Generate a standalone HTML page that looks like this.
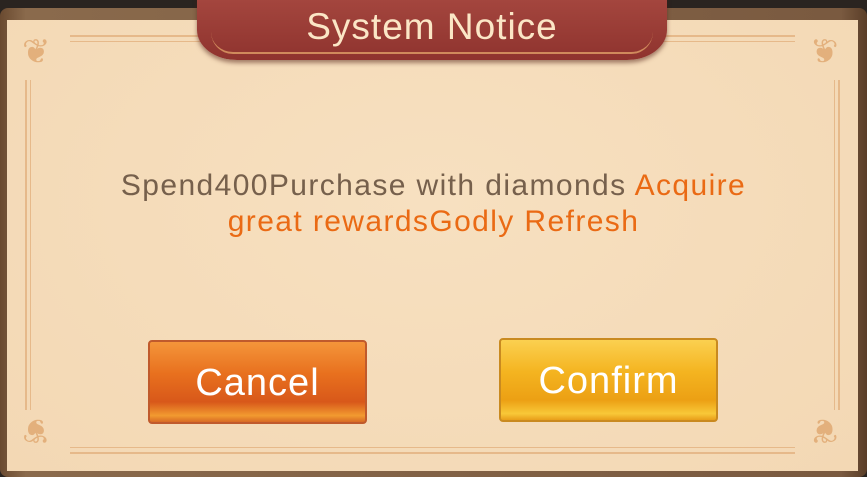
<!DOCTYPE html>
<html><head><style>
body{margin:0;width:867px;height:477px;overflow:hidden;background:#2a2420;font-family:"Liberation Sans",sans-serif;position:relative}
.wood{position:absolute;left:0;top:8px;width:867px;height:469px;background:linear-gradient(90deg,#6a4a30,#8a6a4c 3%,#7a5a40 97%,#5a3e28);border-radius:8px}
.paper{position:absolute;left:7px;top:20px;width:851px;height:451px;background:radial-gradient(ellipse at 50% 40%,#f7e0c0,#f3d8b4);}
.ln{position:absolute;border-color:#e6b98a;border-style:solid;border-width:0}
.rib{position:absolute;left:197px;top:-4px;width:470px;height:64px;background:linear-gradient(#a5473f,#8f332e);border-radius:0 0 40px 40px/0 0 30px 30px;box-shadow:0 3px 4px rgba(80,30,20,.5)}
.rib:after{content:"";position:absolute;left:14px;right:14px;bottom:6px;height:20px;border-bottom:2px solid #d08a5c;border-radius:0 0 30px 30px}
.title{position:absolute;left:197px;width:470px;top:6px;text-align:center;color:#fbe6c6;font-size:37px;letter-spacing:1px}
.msg{position:absolute;left:0;width:867px;top:168px;text-align:center;font-size:30px;letter-spacing:1.4px;line-height:36px;color:#76604c}
.o{color:#ea6a14}
.btn{position:absolute;width:219px;height:84px;border-radius:4px;color:#fff;font-size:38px;letter-spacing:1px;text-align:center;line-height:82px;box-sizing:border-box}
.c{left:148px;top:340px;background:linear-gradient(#f4953a,#e8701e 40%,#d8581a 75%,#f29a30 92%,#d86a24);border:2px solid #c05a2c}
.f{left:499px;top:338px;background:linear-gradient(#fbd050,#f4b420 40%,#eca014 75%,#f8c838 92%,#e89e1a);border:2px solid #c98a20}
</style></head><body>
<div class="wood"></div>
<div class="paper"></div>
<div class="ln" style="left:70px;top:35px;width:150px;border-top-width:2px"></div>
<div class="ln" style="left:645px;top:35px;width:150px;border-top-width:2px"></div>
<div class="ln" style="left:70px;top:41px;width:150px;border-top-width:1px"></div>
<div class="ln" style="left:645px;top:41px;width:150px;border-top-width:1px"></div>
<div class="ln" style="left:25px;top:80px;height:330px;border-left-width:2px;border-right-width:1px;width:3px"></div>
<div class="ln" style="left:834px;top:80px;height:330px;border-left-width:1px;border-right-width:2px;width:3px"></div>
<div class="ln" style="left:70px;top:447px;width:725px;border-top-width:1px"></div>
<div class="ln" style="left:70px;top:452px;width:725px;border-top-width:2px"></div>
<div style="position:absolute;left:22px;top:32px;color:#e3b07c;font-size:34px">❦</div>
<div style="position:absolute;left:810px;top:32px;color:#e3b07c;font-size:34px;transform:scaleX(-1)">❦</div>
<div style="position:absolute;left:22px;top:410px;color:#e3b07c;font-size:34px;transform:scaleY(-1)">❦</div>
<div style="position:absolute;left:810px;top:410px;color:#e3b07c;font-size:34px;transform:scale(-1,-1)">❦</div>
<div class="rib"></div>
<div class="title">System Notice</div>
<div class="msg">Spend400Purchase with diamonds <span class="o">Acquire</span><br><span class="o">great rewardsGodly Refresh</span></div>
<div class="btn c">Cancel</div>
<div class="btn f">Confirm</div>
</body></html>
